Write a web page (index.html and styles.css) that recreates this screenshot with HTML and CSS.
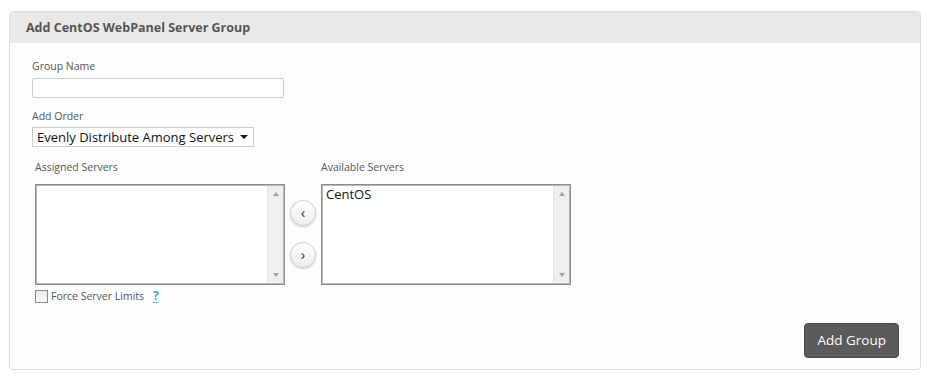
FILE: index.html
```html
<!DOCTYPE html>
<html lang="en">
<head>
    <meta charset="UTF-8">
    <title>Add CentOS WebPanel Server Group</title>
    <link rel="stylesheet" href="styles.css">
</head>
<body>
    <main class="panel">
        <div class="panel-heading">Add CentOS WebPanel Server Group</div>
        <div class="panel-body">
            <label class="field-label">Group Name</label>
            <div class="text-input"></div>

            <label class="field-label order-label">Add Order</label>
            <div class="select">
                <span>Evenly Distribute Among Servers</span>
                <span class="caret"></span>
            </div>

            <div class="servers">
                <div class="server-col">
                    <label class="field-label">Assigned Servers</label>
                    <div class="listbox">
                        <div class="list-items"></div>
                        <div class="scrollbar"><span class="up"></span><span class="down"></span></div>
                    </div>
                    <div class="check-row">
                        <span class="checkbox"></span>
                        <span class="check-text">Force Server Limits</span>
                        <span class="help">?</span>
                    </div>
                </div>
                <div class="arrows">
                    <span class="round-btn">&lsaquo;</span>
                    <span class="round-btn">&rsaquo;</span>
                </div>
                <div class="server-col">
                    <label class="field-label">Available Servers</label>
                    <div class="listbox">
                        <div class="list-items">CentOS</div>
                        <div class="scrollbar"><span class="up"></span><span class="down"></span></div>
                    </div>
                </div>
            </div>

            <div class="actions">
                <span class="btn">Add Group</span>
            </div>
        </div>
    </main>
</body>
</html>
```

FILE: styles.css
```css
body {
    margin: 0;
    background: #fff;
    font-family: 'Open Sans', sans-serif;
    color: #555;
}

.panel {
    margin: 11px 9px 0;
    width: 910px;
    border: 1px solid #ddd;
    border-radius: 4px;
    background: #fdfdfd;
    overflow: hidden;
}

.panel-heading {
    height: 31px;
    line-height: 31px;
    padding-left: 16px;
    background: #e9e9e9;
    font-size: 12.5px;
    font-weight: bold;
    color: #555;
}

.panel-body {
    padding: 15px 21px 11px 22px;
}

.field-label {
    display: block;
    font-size: 10.5px;
    line-height: 17px;
    color: #555;
}

.text-input {
    margin-top: 3px;
    width: 250px;
    height: 18px;
    border: 1px solid #ccc;
    border-radius: 2px;
    background: #fff;
}

.order-label {
    margin-top: 10px;
}

.select {
    margin-top: 2px;
    width: 216px;
    height: 18px;
    border: 1px solid #ccc;
    background: #fff;
    display: flex;
    align-items: center;
    justify-content: space-between;
    padding: 0 0 0 4px;
    font-size: 13px;
    color: #111;
}

.caret {
    width: 0;
    height: 0;
    border-left: 4px solid transparent;
    border-right: 4px solid transparent;
    border-top: 4px solid #111;
    margin-right: 5px;
}

.servers {
    display: flex;
    margin-top: 12px;
    padding-left: 3px;
}

.server-col {
    width: 250px;
}

.server-col .field-label {
    margin-bottom: 8px;
}

.listbox {
    height: 99px;
    border: 1px solid #8c8c8c;
    box-shadow: inset 0 0 0 1px #b8b8b8;
    background: #fff;
    display: flex;
}

.list-items {
    flex: 1;
    padding: 1px 4px;
    font-size: 13px;
    line-height: 17px;
    color: #111;
}

.scrollbar {
    width: 15px;
    margin: 1px 1px 1px 0;
    background: #efefef;
    border-left: 1px solid #e4e4e4;
    display: flex;
    flex-direction: column;
    justify-content: space-between;
    align-items: center;
    padding: 6px 0;
}

.up {
    border-left: 3px solid transparent;
    border-right: 3px solid transparent;
    border-bottom: 4px solid #a3a3a3;
}

.down {
    border-left: 3px solid transparent;
    border-right: 3px solid transparent;
    border-top: 4px solid #a3a3a3;
}

.arrows {
    width: 36px;
    display: flex;
    flex-direction: column;
    align-items: center;
    padding-top: 41px;
    gap: 16px;
}

.round-btn {
    width: 26px;
    height: 26px;
    border: 1px solid #ccc;
    border-radius: 50%;
    background: linear-gradient(#fff, #ececec);
    box-shadow: 0 1px 2px rgba(0, 0, 0, 0.2);
    display: flex;
    align-items: center;
    justify-content: center;
    font-size: 15px;
    line-height: 1;
    color: #333;
    padding-bottom: 2px;
    box-sizing: border-box;
}

.check-row {
    display: flex;
    align-items: center;
    margin-top: 4px;
    font-size: 11px;
}

.checkbox {
    width: 11px;
    height: 11px;
    border: 1px solid #888;
    background: linear-gradient(#e8e8e8, #fafafa);
    margin-right: 3px;
}

.check-text {
    color: #555;
    font-size: 10.5px;
}

.help {
    margin-left: 9px;
    color: #3aa8d8;
    font-weight: bold;
    font-size: 12px;
    border-bottom: 1px dotted #3aa8d8;
    line-height: 13px;
}

.actions {
    display: flex;
    justify-content: flex-end;
    margin-top: 20px;
}

.btn {
    background: #5b5b5b;
    color: #fff;
    font-size: 13.5px;
    line-height: 33px;
    padding: 0 12px;
    border: 1px solid #4a4a4a;
    border-radius: 4px;
}
```
